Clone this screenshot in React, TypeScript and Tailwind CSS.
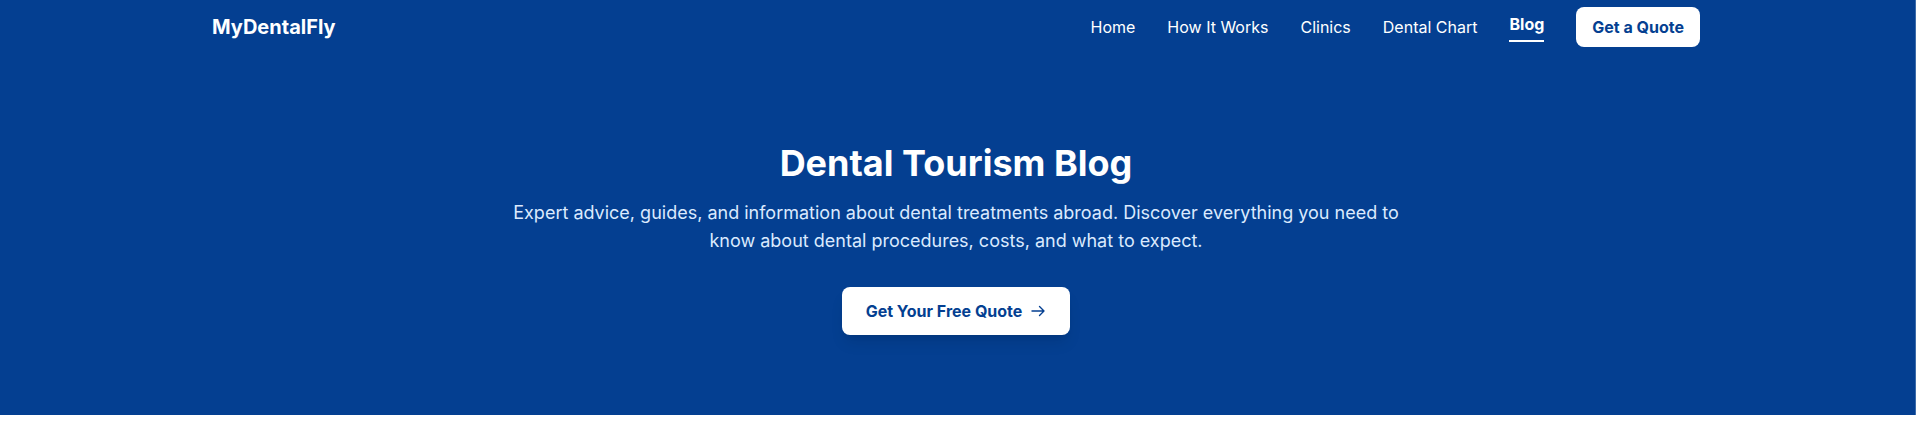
const links = ["Home", "How It Works", "Clinics", "Dental Chart"];

export default function App() {
  return (
    <div className="min-h-screen bg-white font-['Inter',sans-serif]">
      <div className="border-r border-[#3c6cab] bg-[#043f91] pr-[3px] text-white">
        <header className="mx-auto flex max-w-[1536px] items-center justify-between px-6">
          <a href="#" className="text-xl font-bold">MyDentalFly</a>
          <nav className="flex items-center gap-8 py-[7px]">
            {links.map((l) => (
              <a key={l} href="#" className="text-base">{l}</a>
            ))}
            <a href="#" className="border-b-2 border-white pb-1 text-base font-bold">Blog</a>
            <button className="h-10 rounded-lg bg-white px-4 text-base font-bold text-[#043f91]">Get a Quote</button>
          </nav>
        </header>
        <section className="mx-auto flex max-w-[896px] flex-col items-center pt-[89px] pb-20 text-center">
          <h1 className="text-4xl font-bold">Dental Tourism Blog</h1>
          <p className="mt-4 text-lg leading-7 text-blue-100">
            Expert advice, guides, and information about dental treatments abroad. Discover everything you need to know about dental procedures, costs, and what to expect.
          </p>
          <button className="mt-8 flex h-12 items-center gap-2 rounded-lg bg-white px-6 text-base font-bold text-[#043f91] shadow-lg">
            Get Your Free Quote
            <svg className="h-4 w-4" viewBox="0 0 16 16" fill="none" stroke="currentColor" strokeWidth="1.4" strokeLinecap="round" strokeLinejoin="round" aria-hidden="true">
              <path d="M2 8h12M9.500 3.500 14 8l-4.500 4.500" />
            </svg>
          </button>
        </section>
      </div>
    </div>
  );
}
